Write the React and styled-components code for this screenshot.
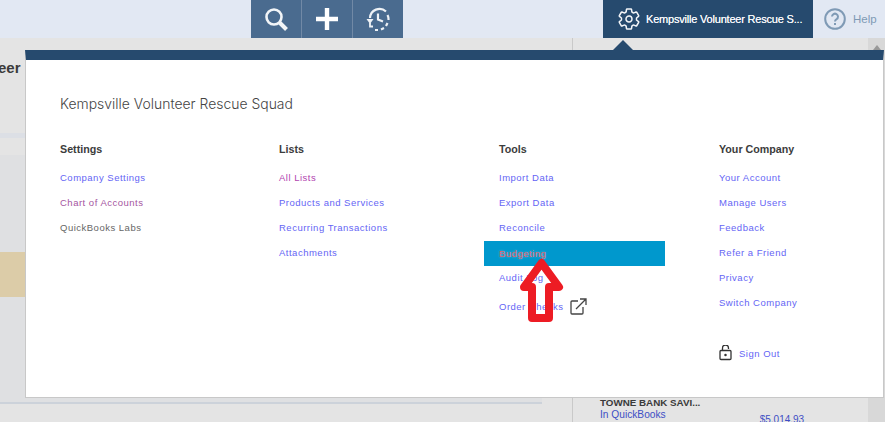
import React from 'react';
import styled, { createGlobalStyle } from 'styled-components';
import { IoSettingsOutline } from 'react-icons/io5';

const GlobalStyle = createGlobalStyle`
  html, body {
    margin: 0;
    padding: 0;
    background: #e4e4e4;
    overflow: hidden;
  }
  * {
    box-sizing: border-box;
  }
`;

const Page = styled.div`
  position: relative;
  width: 885px;
  height: 422px;
  overflow: hidden;
  font-family: 'Liberation Sans', Arial, sans-serif;
`;

const TopBar = styled.header`
  display: flex;
  height: 38px;
  background: #e2e8f3;
  padding-left: 251px;
`;

const ActionGroup = styled.div`
  display: flex;
  width: 152px;
  background: #4a6b8f;
`;

const ActionButton = styled.div`
  flex: 1;
  display: flex;
  align-items: center;
  justify-content: center;
  & + & {
    border-left: 1px solid #7189a6;
  }
`;

const CompanyTab = styled.div`
  display: flex;
  align-items: center;
  gap: 5px;
  width: 210px;
  margin-left: 200px;
  padding-left: 14px;
  background: #264a6e;
  color: #f4f6f9;
  font-size: 11px;
  letter-spacing: -0.2px;
  text-shadow: 0 0 0.6px #f4f6f9;
  white-space: nowrap;
`;

const HelpLink = styled.div`
  display: flex;
  align-items: center;
  gap: 7px;
  padding-left: 11px;
  color: #7f9ab5;
  font-size: 11.5px;
`;

const Backdrop = styled.div`
  display: flex;
  height: 384px;
`;

const BackMain = styled.div`
  width: 572px;
  display: flex;
  flex-direction: column;
`;

const BackTitle = styled.div`
  height: 95px;
  padding-top: 21px;
  margin-left: -2px;
  font-size: 15px;
  font-weight: bold;
  color: #3b3b3b;
`;

const BackBand = styled.div`
  height: 5px;
  background: #dcdfe5;
`;

const BackStrip = styled.div`
  height: 17px;
`;

const BackRows = styled.div`
  width: 542px;
  height: 249px;
  padding-top: 97px;
  background: #dfe0e2;
  border-bottom: 2px solid #ccd2da;
`;

const BackHighlight = styled.div`
  height: 45px;
  background: #dccca8;
`;

const BackSide = styled.aside`
  width: 296px;
  padding: 359px 0 0 27px;
  border-left: 1px solid #c9c9c9;
`;

const BankName = styled.div`
  font-size: 9.8px;
  line-height: 12px;
  font-weight: bold;
  color: #3a3a3a;
`;

const BankRow = styled.div`
  display: flex;
  font-size: 10.2px;
  line-height: 12px;
  color: #3d4fc4;
`;

const BankAmount = styled.span`
  margin-left: 94px;
  padding-top: 5px;
  font-size: 10px;
`;

const Scrollbar = styled.div`
  width: 17px;
  padding-top: 7px;
  display: flex;
  justify-content: center;
  background: #d8d8d8;
`;

const ScrollArrow = styled.div`
  width: 0;
  height: 0;
  border-left: 4px solid transparent;
  border-right: 4px solid transparent;
  border-bottom: 5px solid #999;
`;

const Caret = styled.div`
  position: absolute;
  left: 613px;
  top: 40px;
  width: 0;
  height: 0;
  border-left: 10px solid transparent;
  border-right: 10px solid transparent;
  border-bottom: 10px solid #264a6e;
`;

const Menu = styled.section`
  position: absolute;
  left: 25px;
  top: 50px;
  width: 859px;
  height: 348px;
  background: #fff;
  border: 1px solid #c8c8c8;
  border-top: 10px solid #264a6e;
  padding: 35px 0 0 34px;
`;

const MenuTitle = styled.h2`
  margin: 0 0 27px;
  font-family: Inter, 'Liberation Sans', sans-serif;
  font-size: 13.95px;
  line-height: 18px;
  font-weight: 300;
  color: #444;
`;

const Columns = styled.div`
  display: grid;
  grid-template-columns: 219px 220px 220px 170px;
`;

const Column = styled.div`
  display: flex;
  flex-direction: column;
`;

const ColumnHead = styled.h3`
  margin: 0 0 7px;
  font-size: 10.7px;
  line-height: 18px;
  font-weight: bold;
  color: #3c3c3c;
`;

const Item = styled.div`
  display: flex;
  align-items: center;
  gap: 6px;
  height: 25px;
  font-size: 9.5px;
  letter-spacing: 0.5px;
  white-space: nowrap;
  color: ${props => props.$color || '#6565f5'};
`;

const ActiveItem = styled(Item)`
  width: 181px;
  margin: 1px 0 -1px -15px;
  padding-left: 15px;
  background: #0098cd;
  color: #e2606c;
  text-shadow: 0 0 2px rgba(255, 255, 255, 0.5);
`;

const CheckItem = styled(Item)`
  margin-top: 4px;
`;

const SignOut = styled(Item)`
  margin-top: 25px;
  gap: 7px;
  padding-top: 1px;
`;

const Arrow = styled.svg`
  position: absolute;
  left: 515px;
  top: 255px;
`;

const App = () => {
  const settings = [
    { label: 'Company Settings' },
    { label: 'Chart of Accounts', color: '#a5559f' },
    { label: 'QuickBooks Labs', color: '#666' },
  ];
  const lists = [
    { label: 'All Lists', color: '#b144b0' },
    { label: 'Products and Services' },
    { label: 'Recurring Transactions' },
    { label: 'Attachments' },
  ];
  const company = ['Your Account', 'Manage Users', 'Feedback', 'Refer a Friend', 'Privacy', 'Switch Company'];

  return (
    <Page>
      <GlobalStyle />
      <TopBar>
        <ActionGroup>
          <ActionButton>
            <svg width="24" height="24" viewBox="0 0 24 24" fill="none" stroke="#f2f5f8" strokeWidth="2.6">
              <circle cx="10" cy="10" r="7.5" />
              <path d="M15.5 15.5l7 7" strokeWidth="4" />
            </svg>
          </ActionButton>
          <ActionButton>
            <svg width="22" height="22" viewBox="0 0 22 22" fill="none" stroke="#fff" strokeWidth="4.4">
              <path d="M11 0v22M0 11h22" />
            </svg>
          </ActionButton>
          <ActionButton>
            <svg width="24" height="24" viewBox="0 0 24 24" fill="none" stroke="#eef2f6" strokeWidth="2.2">
              <path d="M4 11a9.5 9.5 0 0 1 16-6.5" />
              <path d="M21.5 8a9.5 9.5 0 0 1 1 5M21.5 16l-1.5 3M18 21l-3 1.5M12 23H9" />
              <path d="M12 6.5v6l5 2" />
              <path d="M0.5 12h7L4 17z" fill="#eef2f6" stroke="none" />
              <path d="M4 16v3.5h3" strokeWidth="1.8" />
            </svg>
          </ActionButton>
        </ActionGroup>
        <CompanyTab>
          <IoSettingsOutline size={24} />
          Kempsville Volunteer Rescue S...
        </CompanyTab>
        <HelpLink>
          <svg width="22" height="22" viewBox="0 0 22 22" fill="none" stroke="#7f9ab5" strokeWidth="2">
            <circle cx="11" cy="11" r="9.8" />
            <path d="M8 8.6a3 3 0 1 1 4.6 2.6c-1 .6-1.6 1.2-1.6 2.2" />
            <path d="M11 15v2" />
          </svg>
          Help
        </HelpLink>
      </TopBar>

      <Backdrop>
        <BackMain>
          <BackTitle>eer</BackTitle>
          <BackBand />
          <BackStrip />
          <BackRows>
            <BackHighlight />
          </BackRows>
        </BackMain>
        <BackSide>
          <BankName>TOWNE BANK SAVI...</BankName>
          <BankRow>
            In QuickBooks
            <BankAmount>$5,014.93</BankAmount>
          </BankRow>
        </BackSide>
        <Scrollbar>
          <ScrollArrow />
        </Scrollbar>
      </Backdrop>

      <Caret />
      <Menu>
        <MenuTitle>Kempsville Volunteer Rescue Squad</MenuTitle>
        <Columns>
          <Column>
            <ColumnHead>Settings</ColumnHead>
            {settings.map(item => (
              <Item key={item.label} $color={item.color}>{item.label}</Item>
            ))}
          </Column>
          <Column>
            <ColumnHead>Lists</ColumnHead>
            {lists.map(item => (
              <Item key={item.label} $color={item.color}>{item.label}</Item>
            ))}
          </Column>
          <Column>
            <ColumnHead>Tools</ColumnHead>
            <Item>Import Data</Item>
            <Item>Export Data</Item>
            <Item>Reconcile</Item>
            <ActiveItem>Budgeting</ActiveItem>
            <Item>Audit Log</Item>
            <CheckItem>
              Order Checks
              <svg width="17" height="17" viewBox="0 0 17 17" fill="none" stroke="#444" strokeWidth="1.3">
                <path d="M8 3H2a1 1 0 0 0-1 1v11a1 1 0 0 0 1 1h10a1 1 0 0 0 1-1V9" />
                <path d="M6 11L16 1M10 1h6v6" />
              </svg>
            </CheckItem>
          </Column>
          <Column>
            <ColumnHead>Your Company</ColumnHead>
            {company.map(label => (
              <Item key={label}>{label}</Item>
            ))}
            <SignOut>
              <svg width="13" height="16" viewBox="0 0 13 16" fill="none" stroke="#333" strokeWidth="1.3">
                <rect x="1" y="5.5" width="11" height="9" rx="1" />
                <path d="M3.5 5.5V3a3 3 0 0 1 6 0v1" />
                <circle cx="6.5" cy="10" r="0.6" fill="#333" />
              </svg>
              Sign Out
            </SignOut>
          </Column>
        </Columns>
      </Menu>
      <Arrow width="55" height="72" viewBox="0 0 55 72">
        <path d="M26.5 8 L44 32 H34 V63 H17 V32 H9 Z" fill="none" stroke="#ed1c24" strokeWidth="8" strokeLinejoin="round" />
      </Arrow>
    </Page>
  );
};

export default App;
